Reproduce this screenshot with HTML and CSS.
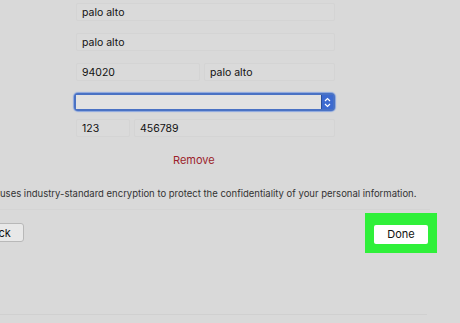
FILE: index.html
```html
<!DOCTYPE html>
<html lang="en">
<head>
    <meta charset="UTF-8">
    <meta name="viewport" content="width=device-width, initial-scale=1.0">
    <title>Billing Info</title>
    <link rel="stylesheet" href="styles.css">
</head>
<body>
    <div class="sheet">
        <form class="fields">
            <div class="row row-first">
                <div class="field full">palo alto</div>
            </div>
            <div class="row">
                <div class="field full">palo alto</div>
            </div>
            <div class="row">
                <div class="field zip">94020</div>
                <div class="field city">palo alto</div>
            </div>
            <div class="row row-select">
                <div class="select">
                    <span class="select-box"></span>
                    <span class="stepper">
                        <svg width="7" height="11" viewBox="0 0 7 11">
                            <path d="M1 4 L3.5 1.5 L6 4" fill="none" stroke="#fff" stroke-width="1.2"/>
                            <path d="M1 7 L3.5 9.5 L6 7" fill="none" stroke="#fff" stroke-width="1.2"/>
                        </svg>
                    </span>
                </div>
            </div>
            <div class="row row-phone">
                <div class="field area">123</div>
                <div class="field phone">456789</div>
            </div>
        </form>

        <div class="remove">Remove</div>

        <p class="notice">uses industry-standard encryption to protect the confidentiality of your personal information.</p>

        <div class="footer">
            <button class="btn back">Back</button>
            <div class="done-wrap">
                <button class="btn done">Done</button>
            </div>
        </div>

        <div class="bottom-rule"></div>
    </div>
</body>
</html>
```

FILE: styles.css
```css
body {
    margin: 0;
    background-color: #d9d9d9;
    font-family: 'Inter', 'Liberation Sans', sans-serif;
    color: #111;
    overflow: hidden;
}
.sheet {
    width: 460px;
    height: 323px;
}
.fields {
    padding-left: 76px;
    width: 259px;
}
.row {
    display: flex;
    gap: 4px;
    margin-top: 12px;
}
.row-first {
    margin-top: 3px;
}
.row-phone {
    margin-top: 8px;
}
.field {
    height: 18px;
    line-height: 17px;
    padding-left: 5px;
    font-size: 10.5px;
    background-color: #dadada;
    border: 1px solid #d4d4d4;
    border-radius: 2px;
    box-sizing: border-box;
}
.full {
    flex: 1;
}
.zip {
    width: 124px;
}
.city {
    flex: 1;
}
.area {
    width: 54px;
}
.phone {
    flex: 1;
}
.select {
    display: flex;
    height: 18px;
    margin-left: -2px;
    width: 261px;
    border: 2px solid #4a72c4;
    border-radius: 4px;
    box-sizing: border-box;
    background-color: #5a82d4;
    box-shadow: 0 0 1px 1px #8aa6de;
}
.select-box {
    flex: 1;
    background-color: #e2e2e2;
    border-right: 1px solid #2c4f9a;
}
.stepper {
    width: 11px;
    display: flex;
    align-items: center;
    justify-content: center;
    background-color: #3d6ad0;
}
.remove {
    margin-top: 16px;
    padding-left: 173px;
    font-size: 11px;
    color: #9c1f2c;
}
.notice {
    margin: 21px 0 0 0;
    font-size: 9.5px;
    color: #333;
    white-space: nowrap;
    padding-bottom: 10px;
    border-bottom: 1px solid #d4d4d4;
    width: 430px;
}
.footer {
    display: flex;
    justify-content: space-between;
    align-items: center;
    margin-top: 3px;
    width: 437px;
}
.btn {
    font-family: 'Inter', 'Liberation Sans', sans-serif;
    font-size: 11px;
    color: #111;
    height: 19px;
    padding: 0;
    border-radius: 3px;
}
.back {
    margin-left: -28px;
    width: 52px;
    background-color: #e8e8e8;
    border: 1px solid #b8b8b8;
}
.done-wrap {
    background-color: #2ff03a;
    padding: 9px;
}
.done {
    width: 54px;
    background-color: #ffffff;
    border: none;
    border-radius: 2px;
}
.bottom-rule {
    margin-top: 61px;
    width: 427px;
    border-top: 1px solid #d0d0d0;
}
```
